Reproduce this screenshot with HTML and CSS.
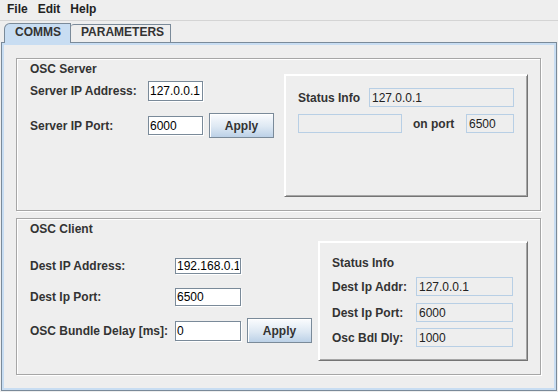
FILE: index.html
```html
<!DOCTYPE html>
<html lang="en">
<head>
    <meta charset="UTF-8">
    <meta name="viewport" content="width=device-width, initial-scale=1.0">
    <title>OSC Settings</title>
    <link rel="stylesheet" href="styles.css">
</head>
<body>
    <div class="menubar">
        <span class="menu">File</span>
        <span class="menu">Edit</span>
        <span class="menu">Help</span>
    </div>

    <div class="tabs">
        <div class="tab selected">COMMS</div>
        <div class="tab">PARAMETERS</div>
    </div>

    <div class="tabContent">
        <section class="group server">
            <div class="form">
                <div class="groupTitle">OSC Server</div>
                <div class="row">
                    <label class="label">Server IP Address:</label>
                    <input class="field" type="text" value="127.0.0.1">
                </div>
                <div class="row">
                    <label class="label">Server IP Port:</label>
                    <input class="field" type="text" value="6000">
                    <button class="button">Apply</button>
                </div>
            </div>
            <div class="statusBox">
                <div class="statusRow">
                    <span class="statusLabel">Status Info</span>
                    <input class="field ro wide" type="text" value="127.0.0.1" readonly>
                </div>
                <div class="statusRow">
                    <input class="field ro blank" type="text" value="" readonly>
                    <span class="portLabel">on port</span>
                    <input class="field ro port" type="text" value="6500" readonly>
                </div>
            </div>
        </section>

        <section class="group client">
            <div class="form">
                <div class="groupTitle">OSC Client</div>
                <div class="row">
                    <label class="label">Dest IP Address:</label>
                    <input class="field" type="text" value="192.168.0.1">
                </div>
                <div class="row">
                    <label class="label">Dest Ip Port:</label>
                    <input class="field" type="text" value="6500">
                </div>
                <div class="row">
                    <label class="label">OSC Bundle Delay [ms]:</label>
                    <input class="field" type="text" value="0">
                    <button class="button">Apply</button>
                </div>
            </div>
            <div class="statusBox">
                <div class="groupTitle">Status Info</div>
                <div class="statusRow">
                    <span class="statusLabel">Dest Ip Addr:</span>
                    <input class="field ro" type="text" value="127.0.0.1" readonly>
                </div>
                <div class="statusRow">
                    <span class="statusLabel">Dest Ip Port:</span>
                    <input class="field ro" type="text" value="6000" readonly>
                </div>
                <div class="statusRow">
                    <span class="statusLabel">Osc Bdl Dly:</span>
                    <input class="field ro" type="text" value="1000" readonly>
                </div>
            </div>
        </section>
    </div>
</body>
</html>
```

FILE: styles.css
```css
* {
    box-sizing: border-box;
}
body {
    margin: 0;
    width: 558px;
    height: 392px;
    overflow: hidden;
    background: #eeeeee;
    font-family: 'Liberation Sans', Arial, sans-serif;
    font-size: 12px;
    font-weight: bold;
    color: #333333;
}

/* menu bar */
.menubar {
    display: flex;
    height: 21px;
    line-height: 18px;
    padding-left: 2px;
    border-bottom: 1px solid #d4d4d4;
}
.menu {
    padding: 0 5px;
    color: #222;
}

/* tabs */
.tabs {
    display: flex;
    align-items: flex-end;
    height: 21px;
    padding-left: 4px;
}
.tab {
    width: 100px;
    height: 18px;
    line-height: 15px;
    padding-left: 10px;
    border: 1px solid #7a8a99;
    border-left: none;
    border-bottom: none;
    border-top-left-radius: 3px;
}
.tab.selected {
    position: relative;
    z-index: 1;
    width: 67px;
    height: 20px;
    line-height: 17px;
    margin-bottom: -1px;
    background: #c8ddf2;
    border-left: 1px solid #7a8a99;
    border-top-left-radius: 6px;
}
.tabContent {
    width: 556px;
    height: 349px;
    margin-left: 1px;
    padding: 15px 14px;
    border: 1px solid #7a8a99;
    box-shadow: inset 0 0 0 2px #c8ddf2;
}

/* etched groups */
.group {
    display: flex;
    align-items: flex-start;
    width: 525px;
    padding: 4px 0 0 13px;
    border: 1px solid #a6a6a6;
    box-shadow: inset 1px 1px 0 #fff, 1px 1px 0 #fff;
}
.server {
    height: 153px;
}
.client {
    height: 157px;
    margin-top: 7px;
}
.groupTitle {
    line-height: 12px;
    height: 12px;
}
.form {
    flex: none;
}
.server .form {
    width: 254px;
}
.client .form {
    width: 288px;
}
.row {
    display: flex;
    align-items: center;
}
.server .label {
    width: 118px;
}
.client .label {
    width: 145px;
}

/* server form rows */
.server .row:nth-child(2) {
    height: 20px;
    margin-top: 6px;
}
.server .row:nth-child(2) .field {
    height: 20px;
}
.server .row:nth-child(3) {
    height: 25px;
    margin-top: 12px;
}
.server .row:nth-child(3) .field {
    height: 19px;
}
.server .row .field {
    width: 55px;
}

/* client form rows */
.client .row {
    height: 25px;
}
.client .row .field {
    width: 66px;
}
.client .row:nth-child(2) {
    margin-top: 18px;
}
.client .row:nth-child(2) .field {
    height: 16px;
}
.client .row:nth-child(3) {
    margin-top: 6px;
}
.client .row:nth-child(3) .field {
    height: 18px;
}
.client .row:nth-child(4) {
    margin-top: 9px;
}
.client .row:nth-child(4) .field {
    height: 20px;
}

/* text fields */
.field {
    margin: 0;
    padding: 0 1px;
    border: 1px solid #7a8a99;
    box-shadow: 1px 1px 0 #fff;
    background: #fff;
    font-family: 'Liberation Sans', Arial, sans-serif;
    font-size: 12px;
    font-weight: normal;
    color: #000;
    outline: none;
}
.field.ro {
    height: 19px;
    padding-left: 2px;
    border-color: #b8cfe5;
    background: #eeeeee;
    box-shadow: none;
    color: #222;
}

.button {
    width: 65px;
    height: 25px;
    margin-left: 6px;
    padding: 0;
    border: 1px solid #7a8a99;
    box-shadow: inset 1px 1px 0 #fff;
    background: linear-gradient(#fbfcfe, #dde8f3 55%, #bcd1e7);
    font-family: 'Liberation Sans', Arial, sans-serif;
    font-size: 12px;
    font-weight: bold;
    color: #333;
}

/* raised status boxes */
.statusBox {
    flex: none;
    border: 1px solid;
    border-color: #fff #747474 #747474 #fff;
    box-shadow: inset 1px 1px 0 #fff, inset -1px -1px 0 #a6a6a6;
}
.server .statusBox {
    width: 244px;
    height: 123px;
    margin-top: 11px;
    padding: 13px 0 0 13px;
}
.client .statusBox {
    width: 210px;
    height: 120px;
    margin-top: 18px;
    padding: 15px 0 0 13px;
}
.statusRow {
    display: flex;
    align-items: center;
    height: 19px;
}
.server .statusRow + .statusRow {
    margin-top: 7px;
}
.server .statusLabel {
    width: 71px;
}
.wide {
    width: 145px;
}
.blank {
    width: 104px;
}
.portLabel {
    width: 53px;
    margin-left: 11px;
}
.port {
    width: 48px;
}
.client .statusLabel {
    width: 84px;
}
.client .statusRow .field {
    width: 97px;
}
.client .statusRow:nth-child(2) {
    margin-top: 8px;
}
.client .statusRow:nth-child(3) {
    margin-top: 7px;
}
.client .statusRow:nth-child(4) {
    margin-top: 6px;
}
```
